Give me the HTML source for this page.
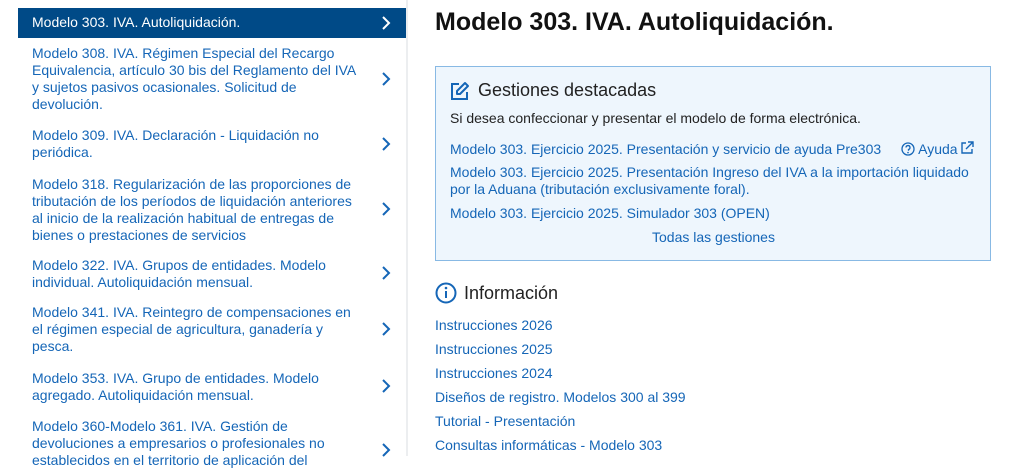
<!DOCTYPE html>
<html><head><meta charset="utf-8"><style>
*{margin:0;padding:0;box-sizing:border-box}
body{width:1024px;height:456px;overflow:hidden;background:#fff;font-family:"Liberation Sans",Arial,sans-serif;position:relative}
.nav{position:absolute;left:18px;top:0;width:390px;height:456px;border-right:2px solid #eceef0}
.it{position:absolute;left:0;width:388px;padding-left:14px;font-size:14px;line-height:17px;color:#1566b7}
.it span{display:block;width:330px}
.chev{position:absolute;left:363px;width:10px;height:16px}
.act{background:#004a87;color:#fff;top:8px;height:30px;padding-top:6px}
h1{position:absolute;left:435px;top:8px;font-size:25px;font-weight:bold;color:#111;letter-spacing:0}
.box{position:absolute;left:435px;top:66px;width:556px;height:195px;background:#eef6fd;border:1px solid #88b9e4}
.a{color:#1566b7;font-size:14px;line-height:17px;position:absolute}
.t{position:absolute;color:#222}
</style></head><body>
<div class="nav">
<div class="it act"><span>Modelo 303. IVA. Autoliquidación.</span><svg class="chev" style="top:7px" viewBox="0 0 10 16"><path d="M2 2l6 6-6 6" stroke="#fff" stroke-width="2" fill="none"/></svg></div>
<div class="it" style="top:45px"><span>Modelo 308. IVA. Régimen Especial del Recargo Equivalencia, artículo 30 bis del Reglamento del IVA y sujetos pasivos ocasionales. Solicitud de devolución.</span></div>
<div class="it" style="top:127px"><span>Modelo 309. IVA. Declaración - Liquidación no periódica.</span></div>
<div class="it" style="top:176px"><span>Modelo 318. Regularización de las proporciones de tributación de los períodos de liquidación anteriores al inicio de la realización habitual de entregas de bienes o prestaciones de servicios</span></div>
<div class="it" style="top:257px"><span>Modelo 322. IVA. Grupos de entidades. Modelo individual. Autoliquidación mensual.</span></div>
<div class="it" style="top:304px"><span>Modelo 341. IVA. Reintegro de compensaciones en el régimen especial de agricultura, ganadería y pesca.</span></div>
<div class="it" style="top:370px"><span>Modelo 353. IVA. Grupo de entidades. Modelo agregado. Autoliquidación mensual.</span></div>
<div class="it" style="top:418px"><span>Modelo 360-Modelo 361. IVA. Gestión de devoluciones a empresarios o profesionales no establecidos en el territorio de aplicación del</span></div>
<svg class="chev" style="top:71px" viewBox="0 0 10 16"><path d="M2 2l6 6-6 6" stroke="#1566b7" stroke-width="2" fill="none"/></svg>
<svg class="chev" style="top:136px" viewBox="0 0 10 16"><path d="M2 2l6 6-6 6" stroke="#1566b7" stroke-width="2" fill="none"/></svg>
<svg class="chev" style="top:201px" viewBox="0 0 10 16"><path d="M2 2l6 6-6 6" stroke="#1566b7" stroke-width="2" fill="none"/></svg>
<svg class="chev" style="top:265px" viewBox="0 0 10 16"><path d="M2 2l6 6-6 6" stroke="#1566b7" stroke-width="2" fill="none"/></svg>
<svg class="chev" style="top:321px" viewBox="0 0 10 16"><path d="M2 2l6 6-6 6" stroke="#1566b7" stroke-width="2" fill="none"/></svg>
<svg class="chev" style="top:378px" viewBox="0 0 10 16"><path d="M2 2l6 6-6 6" stroke="#1566b7" stroke-width="2" fill="none"/></svg>
<svg class="chev" style="top:442px" viewBox="0 0 10 16"><path d="M2 2l6 6-6 6" stroke="#1566b7" stroke-width="2" fill="none"/></svg>
</div>
<h1>Modelo 303. IVA. Autoliquidación.</h1>
<div class="box"></div>
<svg style="position:absolute;left:450px;top:81px" width="20" height="20" viewBox="0 0 20 20"><path d="M9 3H2v15h15v-7" stroke="#1566b7" stroke-width="2" fill="none"/><path d="M15 2l3 3-8 8H7v-3z" stroke="#1566b7" stroke-width="2" fill="none" stroke-linejoin="round"/></svg>
<div class="t" style="left:478px;top:80px;font-size:18px">Gestiones destacadas</div>
<div class="t" style="left:450px;top:110px;font-size:14px">Si desea confeccionar y presentar el modelo de forma electrónica.</div>
<div class="a" style="left:450px;top:141px">Modelo 303. Ejercicio 2025. Presentación y servicio de ayuda Pre303</div>
<div class="a" style="left:901px;top:141px">
<svg width="14" height="14" viewBox="0 0 14 14" style="vertical-align:-2px"><circle cx="7" cy="7" r="6" stroke="#1566b7" stroke-width="1.3" fill="none"/><path d="M5 5.5a2 2 0 1 1 2.5 2v1.2" stroke="#1566b7" stroke-width="1.3" fill="none"/><circle cx="7" cy="10.6" r=".8" fill="#1566b7"/></svg> Ayuda<svg width="14" height="14" viewBox="0 0 14 14" style="vertical-align:-1px;margin-left:2px"><path d="M6 2H2v10h10V8M8 1h5v5M13 1L6 8" stroke="#1566b7" stroke-width="1.4" fill="none"/></svg></div>
<div class="a" style="left:450px;top:164px;width:530px">Modelo 303. Ejercicio 2025. Presentación Ingreso del IVA a la importación liquidado por la Aduana (tributación exclusivamente foral).</div>
<div class="a" style="left:450px;top:205px">Modelo 303. Ejercicio 2025. Simulador 303 (OPEN)</div>
<div class="a" style="left:652px;top:229px">Todas las gestiones</div>
<svg style="position:absolute;left:435px;top:282px" width="22" height="22" viewBox="0 0 22 22"><circle cx="11" cy="11" r="9.5" stroke="#1566b7" stroke-width="2" fill="none"/><path d="M11 9v7" stroke="#1566b7" stroke-width="2"/><circle cx="11" cy="6" r="1.3" fill="#1566b7"/></svg>
<div class="t" style="left:464px;top:283px;font-size:18px">Información</div>
<div class="a" style="left:435px;top:317px">Instrucciones 2026</div>
<div class="a" style="left:435px;top:341px">Instrucciones 2025</div>
<div class="a" style="left:435px;top:365px">Instrucciones 2024</div>
<div class="a" style="left:435px;top:389px">Diseños de registro. Modelos 300 al 399</div>
<div class="a" style="left:435px;top:413px">Tutorial - Presentación</div>
<div class="a" style="left:435px;top:437px">Consultas informáticas - Modelo 303</div>
</body></html>
